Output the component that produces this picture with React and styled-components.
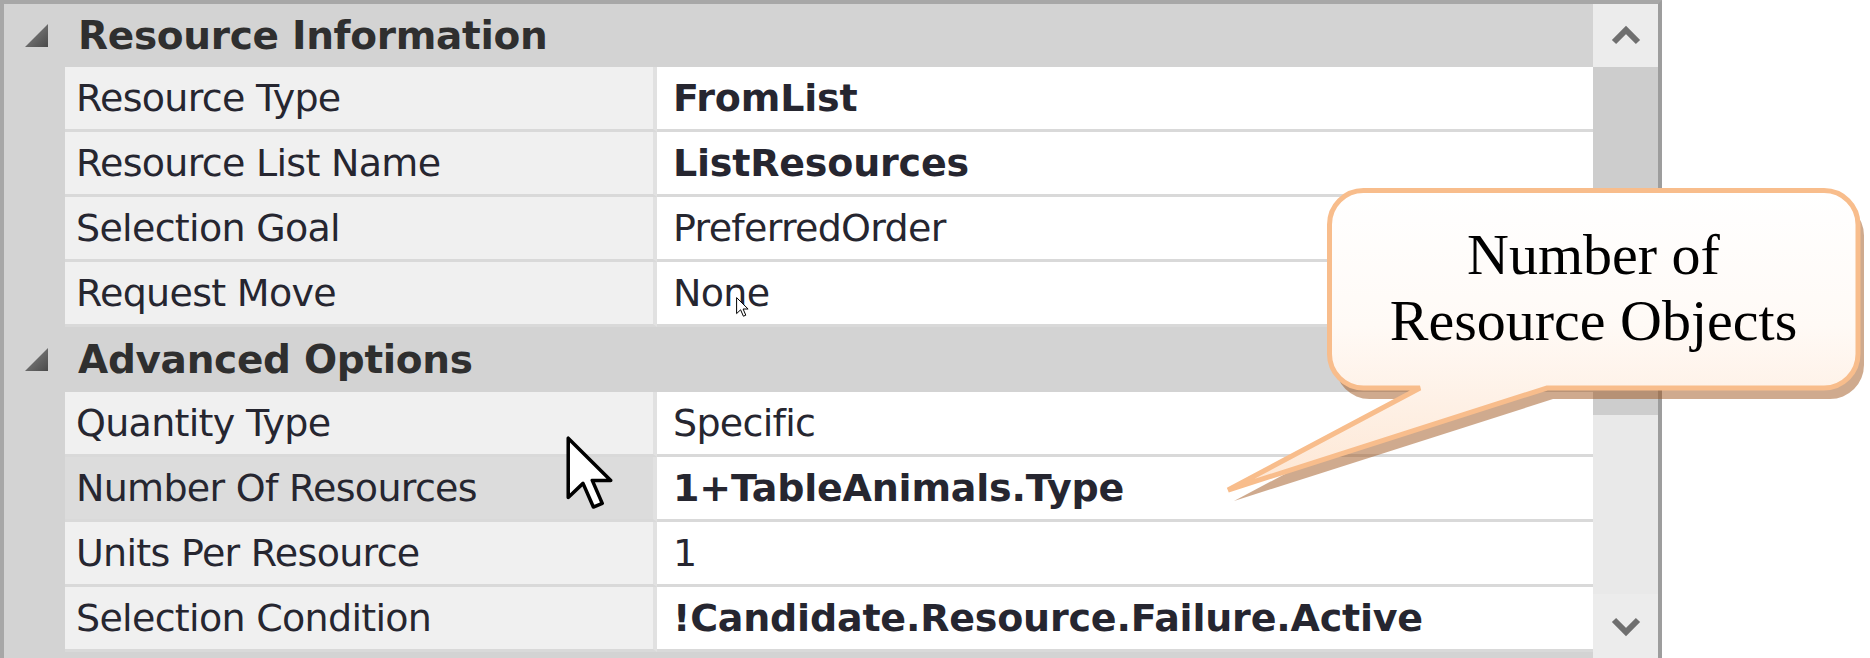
import React from 'react'
import styled, { createGlobalStyle } from 'styled-components'

const GlobalStyle = createGlobalStyle`
    html, body {
        margin: 0;
        padding: 0;
        background: #ffffff;
    }
    body {
        font-family: "DejaVu Sans", "Noto Sans", sans-serif;
    }
`

const categories = [
    {
        title: 'Resource Information',
        rows: [
            { label: 'Resource Type', value: 'FromList', bold: true },
            { label: 'Resource List Name', value: 'ListResources', bold: true },
            { label: 'Selection Goal', value: 'PreferredOrder' },
            { label: 'Request Move', value: 'None' },
        ],
    },
    {
        title: 'Advanced Options',
        rows: [
            { label: 'Quantity Type', value: 'Specific' },
            { label: 'Number Of Resources', value: '1+TableAnimals.Type', bold: true, selected: true },
            { label: 'Units Per Resource', value: '1' },
            { label: 'Selection Condition', value: '!Candidate.Resource.Failure.Active', bold: true },
        ],
    },
]

const Page = styled.div`
    position: relative;
    width: 1870px;
    height: 658px;
    overflow: hidden;
    background: #ffffff;
`

const Panel = styled.div`
    display: flex;
    width: 1662px;
    height: 658px;
    box-sizing: border-box;
    border-top: 4px solid #a7a7a7;
    border-left: 4px solid #a7a7a7;
    border-right: 4px solid #9d9d9d;
    overflow: hidden;
`

const Grid = styled.div`
    flex: 1;
    display: flex;
    flex-direction: column;
    background: #d3d3d3;
`

const CategoryRow = styled.div`
    display: flex;
    align-items: center;
    flex-shrink: 0;
    height: ${props => props.$first ? 63 : 65}px;
    background: #d3d3d3;
`

const Expander = styled.svg`
    width: 24px;
    height: 24px;
    margin-left: 21px;
    flex-shrink: 0;
`

const CategoryTitle = styled.span`
    margin-left: 29px;
    font-size: 39px;
    font-weight: 700;
    letter-spacing: -0.3px;
    color: #2f2f2f;
    white-space: nowrap;
`

const PropRow = styled.div`
    display: flex;
    flex-shrink: 0;
    height: 65px;
`

const Gutter = styled.div`
    width: 61px;
    flex-shrink: 0;
    background: #d3d3d3;
`

const Cell = styled.div`
    display: flex;
    align-items: center;
    box-sizing: border-box;
    border-bottom: 3px solid #d9d9d9;
    font-size: 38px;
    letter-spacing: -0.7px;
    color: #262630;
    white-space: nowrap;
    overflow: hidden;
`

const LabelCell = styled(Cell)`
    width: 592px;
    flex-shrink: 0;
    padding-left: 11px;
    border-right: 4px solid #e1e1e1;
    background: ${props => props.$selected ? '#dcdcdc' : '#f0f0f0'};
`

const ValueCell = styled(Cell)`
    flex: 1;
    padding-left: 16px;
    background: #ffffff;
    font-weight: ${props => props.$bold ? 700 : 400};
    letter-spacing: ${props => props.$bold ? '-0.2px' : '-0.7px'};
`

const Scrollbar = styled.div`
    width: 65px;
    flex-shrink: 0;
    display: flex;
    flex-direction: column;
    background: #e9e9e9;
`

const ScrollButton = styled.div`
    height: ${props => props.$height}px;
    flex-shrink: 0;
    display: flex;
    align-items: center;
    justify-content: center;
    background: #ececec;
`

const Thumb = styled.div`
    height: 348px;
    flex-shrink: 0;
    background: #cdcdcd;
`

const Track = styled.div`
    flex: 1;
    background: #e9e9e9;
`

const Cursor = styled.svg`
    position: absolute;
    left: ${props => props.$x}px;
    top: ${props => props.$y}px;
    pointer-events: none;
`

const Callout = styled.div`
    position: absolute;
    left: 1200px;
    top: 180px;
    width: 670px;
    height: 340px;
`

const BubbleShape = styled.svg`
    display: block;
    width: 670px;
    height: 340px;
`

const BubbleText = styled.div`
    position: absolute;
    left: 127px;
    top: 8px;
    width: 533px;
    height: 202px;
    display: flex;
    flex-direction: column;
    align-items: center;
    justify-content: center;
    padding-bottom: 2px;
    box-sizing: border-box;
    font-family: "Liberation Serif", "Times New Roman", serif;
    font-size: 58px;
    line-height: 66px;
    color: #000000;
    text-align: center;
`

function Chevron({ down }) {
    return (
        <svg width="30" height="22" viewBox="0 0 30 22">
            <polyline
                points={down ? '3,5 15,17 27,5' : '3,17 15,5 27,17'}
                fill="none"
                stroke="#6f6f6f"
                strokeWidth="6"
            />
        </svg>
    )
}

function Arrow({ x, y, scale }) {
    const w = 13 * scale
    const h = 20 * scale
    return (
        <Cursor $x={x} $y={y} width={w} height={h} viewBox="-0.6 -0.6 13 20">
            <path
                d="M0,0 L0,16 L4,12.2 L6.8,18.6 L9.2,17.6 L6.5,11.4 L11.5,11.4 Z"
                fill="#ffffff"
                stroke="#000000"
                strokeWidth={scale > 2 ? 0.95 : 1}
                strokeLinejoin="round"
            />
        </Cursor>
    )
}

const bubblePath = 'M163.5,10.5 H624 A34,34 0 0 1 658,44.5 V174 A34,34 0 0 1 624,208 H347 L28,310 L220,208 H163.5 A34,34 0 0 1 129.5,174 V44.5 A34,34 0 0 1 163.5,10.5 Z'

export default function App() {
    return (
        <Page>
            <GlobalStyle />
            <Panel>
                <Grid>
                    {categories.map((cat, ci) => (
                        <React.Fragment key={cat.title}>
                            <CategoryRow $first={ci === 0}>
                                <Expander viewBox="0 0 24 24">
                                    <defs>
                                        <linearGradient id={`exp${ci}`} x1="0" y1="0" x2="1" y2="1">
                                            <stop offset="0" stopColor="#8a8a8a" />
                                            <stop offset="1" stopColor="#4a4a4a" />
                                        </linearGradient>
                                    </defs>
                                    <polygon points="0,23 23,23 23,0" fill={`url(#exp${ci})`} />
                                </Expander>
                                <CategoryTitle>{cat.title}</CategoryTitle>
                            </CategoryRow>
                            {cat.rows.map(row => (
                                <PropRow key={row.label}>
                                    <Gutter />
                                    <LabelCell $selected={row.selected}>{row.label}</LabelCell>
                                    <ValueCell $bold={row.bold}>{row.value}</ValueCell>
                                </PropRow>
                            ))}
                        </React.Fragment>
                    ))}
                </Grid>
                <Scrollbar>
                    <ScrollButton $height={63}>
                        <Chevron />
                    </ScrollButton>
                    <Thumb />
                    <Track />
                    <ScrollButton $height={64}>
                        <Chevron down />
                    </ScrollButton>
                </Scrollbar>
            </Panel>

            <Arrow x={736} y={297} scale={1} />
            <Arrow x={566} y={436} scale={3.7} />

            <Callout>
                <BubbleShape viewBox="0 0 670 340">
                    <defs>
                        <linearGradient id="bubbleFill" x1="0" y1="0" x2="0" y2="1">
                            <stop offset="0" stopColor="#ffffff" />
                            <stop offset="0.45" stopColor="#fffaf6" />
                            <stop offset="1" stopColor="#fde6d3" />
                        </linearGradient>
                    </defs>
                    <path d={bubblePath} transform="translate(6,11)" fill="rgba(160,86,30,0.5)" />
                    <path d={bubblePath} fill="url(#bubbleFill)" stroke="#f8bd8c" strokeWidth="5" strokeLinejoin="miter" />
                </BubbleShape>
                <BubbleText>
                    <span>Number of</span>
                    <span>Resource Objects</span>
                </BubbleText>
            </Callout>
        </Page>
    )
}
